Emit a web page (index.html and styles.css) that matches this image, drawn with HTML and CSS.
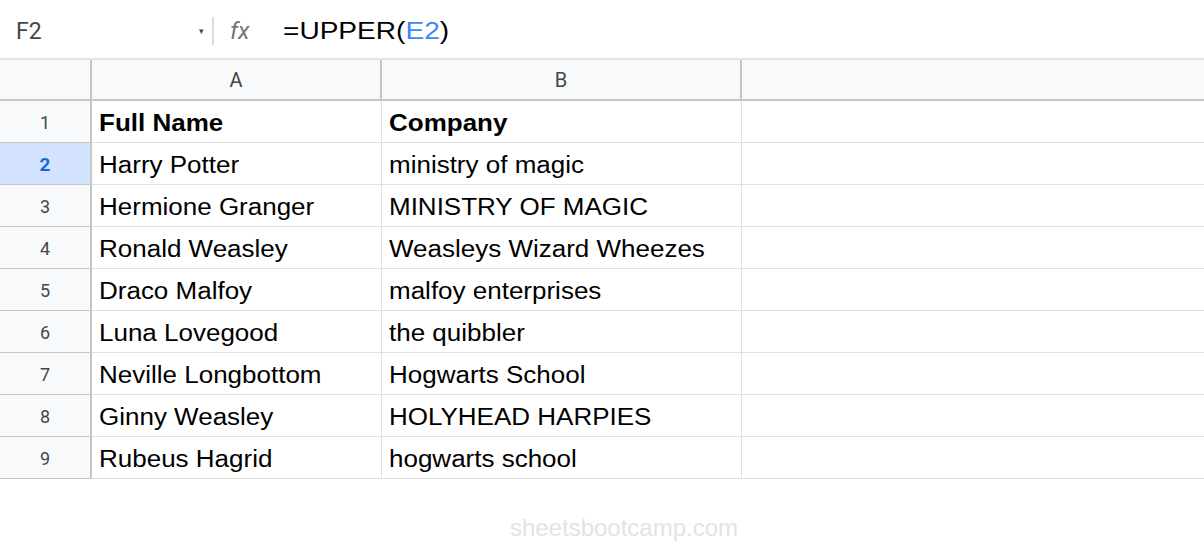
FILE: index.html
```html
<!DOCTYPE html>
<html>
<head>
<meta charset="utf-8">
<link rel="stylesheet" href="styles.css">
</head>
<body>
<div class="formula-bar">
  <div class="name-box">
    <span class="cell-ref">F2</span>
    <span class="caret">&#9662;</span>
  </div>
  <div class="divider"></div>
  <span class="fx">fx</span>
  <span class="formula">=UPPER(<span class="ref">E2</span>)</span>
</div>
<div class="sheet">
  <div class="row head-row">
    <div class="rh corner"></div>
    <div class="ch col-a">A</div>
    <div class="ch col-b">B</div>
    <div class="ch col-rest"></div>
  </div>
  <div class="row">
    <div class="rh">1</div>
    <div class="cell col-a bold"><span class="t">Full Name</span></div>
    <div class="cell col-b bold"><span class="t">Company</span></div>
    <div class="cell col-rest"></div>
  </div>
  <div class="row">
    <div class="rh selected">2</div>
    <div class="cell col-a"><span class="t">Harry Potter</span></div>
    <div class="cell col-b"><span class="t">ministry of magic</span></div>
    <div class="cell col-rest"></div>
  </div>
  <div class="row">
    <div class="rh">3</div>
    <div class="cell col-a"><span class="t">Hermione Granger</span></div>
    <div class="cell col-b"><span class="t">MINISTRY OF MAGIC</span></div>
    <div class="cell col-rest"></div>
  </div>
  <div class="row">
    <div class="rh">4</div>
    <div class="cell col-a"><span class="t">Ronald Weasley</span></div>
    <div class="cell col-b"><span class="t">Weasleys Wizard Wheezes</span></div>
    <div class="cell col-rest"></div>
  </div>
  <div class="row">
    <div class="rh">5</div>
    <div class="cell col-a"><span class="t">Draco Malfoy</span></div>
    <div class="cell col-b"><span class="t">malfoy enterprises</span></div>
    <div class="cell col-rest"></div>
  </div>
  <div class="row">
    <div class="rh">6</div>
    <div class="cell col-a"><span class="t">Luna Lovegood</span></div>
    <div class="cell col-b"><span class="t">the quibbler</span></div>
    <div class="cell col-rest"></div>
  </div>
  <div class="row">
    <div class="rh">7</div>
    <div class="cell col-a"><span class="t">Neville Longbottom</span></div>
    <div class="cell col-b"><span class="t">Hogwarts School</span></div>
    <div class="cell col-rest"></div>
  </div>
  <div class="row">
    <div class="rh">8</div>
    <div class="cell col-a"><span class="t">Ginny Weasley</span></div>
    <div class="cell col-b"><span class="t">HOLYHEAD HARPIES</span></div>
    <div class="cell col-rest"></div>
  </div>
  <div class="row">
    <div class="rh">9</div>
    <div class="cell col-a"><span class="t">Rubeus Hagrid</span></div>
    <div class="cell col-b"><span class="t">hogwarts school</span></div>
    <div class="cell col-rest"></div>
  </div>
</div>
<div class="watermark">sheetsbootcamp.com</div>
</body>
</html>
```
FILE: styles.css
```css
html, body {
  margin: 0;
  padding: 0;
  background: #ffffff;
  width: 1204px;
  height: 546px;
  overflow: hidden;
}
body {
  font-family: Arial, "Liberation Sans", sans-serif;
  color: #000;
}
.formula-bar {
  height: 60px;
  box-sizing: border-box;
  padding-top: 4px;
  display: flex;
  align-items: center;
  border-bottom: 2px solid #e1e3e1;
}
.name-box {
  width: 204px;
  padding-left: 16px;
  box-sizing: border-box;
  display: flex;
  align-items: center;
  justify-content: space-between;
}
.cell-ref {
  font-family: Roboto, Arial, sans-serif;
  font-size: 23px;
  color: #444746;
}
.caret {
  font-size: 9px;
  color: #444746;
}
.divider {
  width: 2px;
  height: 28px;
  background: #dadce0;
  margin-left: 8px;
  margin-right: 16px;
}
.fx {
  font-family: Roboto, Arial, sans-serif;
  font-style: italic;
  font-size: 24px;
  color: #747775;
  width: 53px;
}
.formula {
  font-family: Arial, "Liberation Sans", sans-serif;
  font-size: 23px;
  color: #000;
  display: inline-block;
  transform: scaleX(1.22);
  transform-origin: left center;
}
.formula .ref {
  color: #4285f4;
}
.sheet {
  display: flex;
  flex-direction: column;
}
.row {
  display: flex;
  height: 42px;
  box-sizing: border-box;
}
.head-row {
  height: 41px;
  background: #f8f9fa;
  border-bottom: 2px solid #c4c7c5;
}
.rh {
  width: 92px;
  flex: none;
  box-sizing: border-box;
  background: #f8f9fa;
  border-right: 2px solid #c4c7c5;
  border-bottom: 1px solid #c4c7c5;
  display: flex;
  align-items: center;
  justify-content: center;
  padding-top: 2px;
  font-family: Roboto, Arial, sans-serif;
  font-size: 18px;
  color: #444746;
}
.head-row .rh {
  border-bottom: none;
  padding-top: 0;
}
.rh.selected {
  background: #d3e3fd;
  color: #1a66d8;
  font-weight: bold;
  font-size: 19px;
}
.ch {
  box-sizing: border-box;
  display: flex;
  align-items: center;
  justify-content: center;
  padding-top: 1px;
  font-family: Roboto, Arial, sans-serif;
  font-size: 20px;
  color: #444746;
  border-right: 2px solid #c4c7c5;
}
.col-a {
  width: 290px;
  flex: none;
}
.col-b {
  width: 360px;
  flex: none;
}
.col-rest {
  flex: 1;
  border-right: none;
}
.cell {
  box-sizing: border-box;
  border-right: 1px solid #e1e1e1;
  border-bottom: 1px solid #e1e1e1;
  display: flex;
  align-items: center;
  padding-left: 7px;
  padding-top: 4px;
  font-size: 23px;
  white-space: nowrap;
  overflow: hidden;
}
.t {
  display: inline-block;
  transform: scaleX(1.13);
  transform-origin: left center;
}
.cell.col-rest {
  border-right: none;
}
.bold {
  font-weight: bold;
}
.watermark {
  text-align: center;
  margin-top: 35px;
  padding-left: 44px;
  font-size: 24px;
  color: #e3e3e3;
}
```
